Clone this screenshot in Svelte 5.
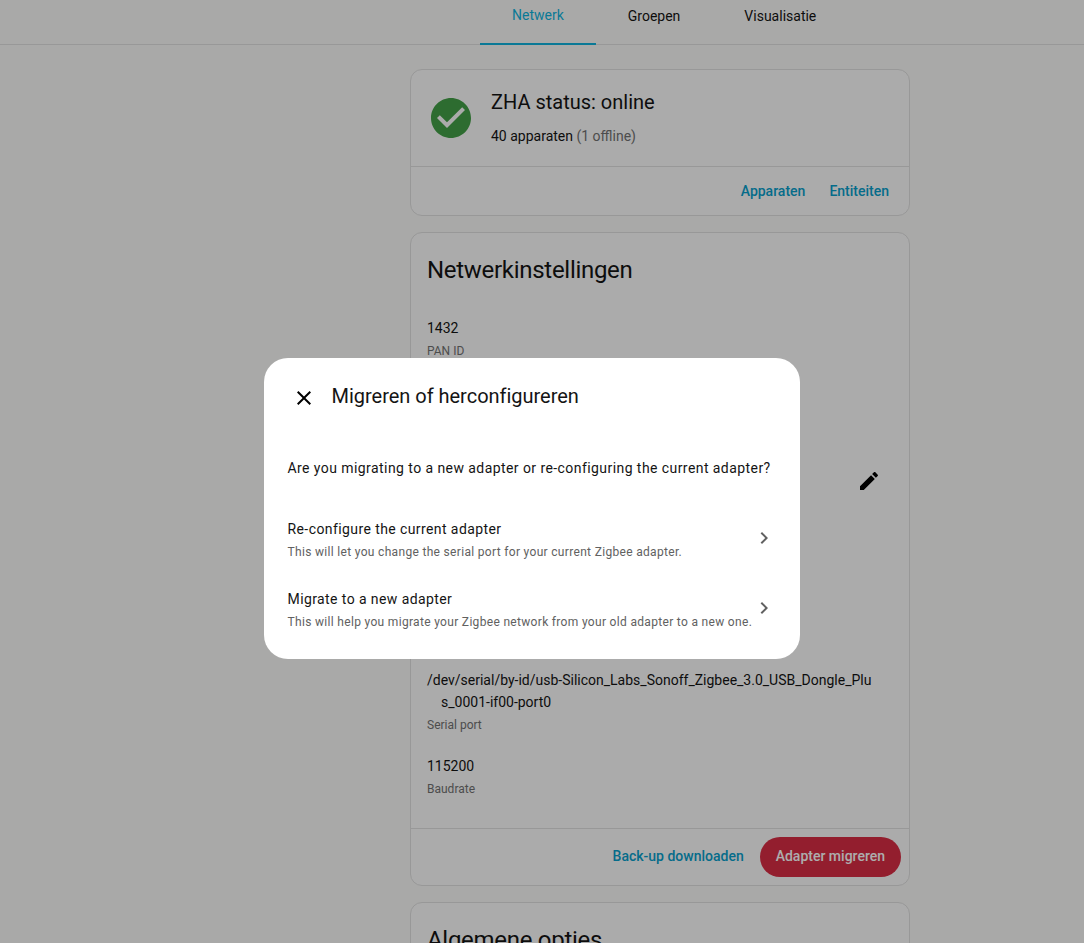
<script>
    const networkRows = [
        { value: "1432", label: "PAN ID" },
        { value: "7f3a91c2d04e6b58", label: "Extended PAN ID" },
        { value: "15", label: "Kanaal", editable: true },
        { value: "00:12:4b:00:24:c1:8e:f0", label: "Coordinator IEEE" },
        { value: "ZNP", label: "Radio type" },
        {
            value: "/dev/serial/by-id/usb-Silicon_Labs_Sonoff_Zigbee_3.0_USB_Dongle_Plus_0001-if00-port0",
            label: "Serial port",
        },
        { value: "115200", label: "Baudrate" },
    ];
</script>

<div class="page">
    <nav class="tabs">
        <a class="tab active" href="#netwerk">Netwerk</a>
        <a class="tab" href="#groepen">Groepen</a>
        <a class="tab" href="#visualisatie">Visualisatie</a>
    </nav>

    <main class="content">
        <section class="card status-card">
            <div class="status">
                <svg class="status-icon" viewBox="0 0 24 24">
                    <path
                        d="M12 2C6.5 2 2 6.5 2 12S6.5 22 12 22 22 17.5 22 12 17.5 2 12 2M10 17L5 12L6.41 10.59L10 14.17L17.59 6.58L19 8L10 17Z"
                    />
                </svg>
                <div>
                    <h2 class="status-title">ZHA status: online</h2>
                    <p class="status-count">40 apparaten <span>(1 offline)</span></p>
                </div>
            </div>
            <div class="actions">
                <a class="link" href="#apparaten">Apparaten</a>
                <a class="link" href="#entiteiten">Entiteiten</a>
            </div>
        </section>

        <section class="card">
            <h1 class="card-title">Netwerkinstellingen</h1>
            <div class="rows">
                {#each networkRows as row}
                    <div class="row" class:editable={row.editable}>
                        <div class="row-text">
                            <div class="row-value">{row.value}</div>
                            <div class="row-label">{row.label}</div>
                        </div>
                        {#if row.editable}
                            <svg class="edit-icon" viewBox="0 0 24 24">
                                <path
                                    d="M20.71,7.04C21.1,6.65 21.1,6 20.71,5.63L18.37,3.29C18,2.9 17.35,2.9 16.96,3.29L15.12,5.12L18.87,8.87M3,17.25V21H6.75L17.81,9.93L14.06,6.18L3,17.25Z"
                                />
                            </svg>
                        {/if}
                    </div>
                {/each}
            </div>
            <div class="actions network-actions">
                <a class="link" href="#backup">Back-up downloaden</a>
                <button class="migrate-btn">Adapter migreren</button>
            </div>
        </section>

        <section class="card">
            <h1 class="card-title">Algemene opties</h1>
        </section>
    </main>
</div>

<div class="scrim"></div>

<div class="dialog" role="dialog">
    <header class="dialog-header">
        <svg class="close-icon" viewBox="0 0 24 24">
            <path
                d="M19,6.41L17.59,5L12,10.59L6.41,5L5,6.41L10.59,12L5,17.59L6.41,19L12,13.41L17.59,19L19,17.59L13.41,12L19,6.41Z"
            />
        </svg>
        <h2 class="dialog-title">Migreren of herconfigureren</h2>
    </header>
    <p class="question">Are you migrating to a new adapter or re-configuring the current adapter?</p>
    <div class="option">
        <div>
            <div class="option-title">Re-configure the current adapter</div>
            <div class="option-desc">This will let you change the serial port for your current Zigbee adapter.</div>
        </div>
        <svg class="chevron" viewBox="0 0 24 24">
            <path d="M8.59,16.58L13.17,12L8.59,7.41L10,6L16,12L10,18L8.59,16.58Z" />
        </svg>
    </div>
    <div class="option">
        <div>
            <div class="option-title">Migrate to a new adapter</div>
            <div class="option-desc">This will help you migrate your Zigbee network from your old adapter to a new one.</div>
        </div>
        <svg class="chevron" viewBox="0 0 24 24">
            <path d="M8.59,16.58L13.17,12L8.59,7.41L10,6L16,12L10,18L8.59,16.58Z" />
        </svg>
    </div>
</div>

<style>
    :global(body) {
        background: #fafaf8;
        overflow: hidden;
    }

    .page {
        height: 943px;
        overflow: hidden;
        font-family: Roboto, "Liberation Sans", sans-serif;
        color: #141414;
    }

    .tabs {
        display: flex;
        height: 44px;
        padding-left: 480px;
        border-bottom: 1px solid #e0e0e0;
    }

    .tab {
        display: flex;
        align-items: center;
        height: 32px;
        padding: 0 32px;
        font-size: 14px;
        font-weight: 400;
        color: #141414;
        text-decoration: none;
    }

    .tab.active {
        box-sizing: border-box;
        height: 45px;
        padding-bottom: 14px;
        color: #0fb3de;
        border-bottom: 2px solid #0fb3de;
    }

    .content {
        display: flex;
        flex-direction: column;
        gap: 16px;
        width: 500px;
        margin-left: 410px;
        padding-top: 24px;
    }

    .card {
        box-sizing: border-box;
        background: #fcfcfc;
        border: 1px solid #e0e0e0;
        border-radius: 12px;
    }

    .status {
        display: flex;
        gap: 16px;
        height: 96px;
        padding-left: 16px;
        align-items: center;
    }

    .status-icon {
        width: 48px;
        height: 48px;
        fill: #43a047;
    }

    .status-title {
        margin: -2px 0 0;
        font-size: 20px;
        font-weight: 400;
        line-height: 28px;
    }

    .status-count {
        margin: 10px 0 0;
        font-size: 14px;
        line-height: 20px;
    }

    .status-count span {
        color: #727272;
    }

    .actions {
        display: flex;
        justify-content: flex-end;
        align-items: center;
        gap: 24px;
        height: 48px;
        padding-right: 20px;
        border-top: 1px solid #e0e0e0;
    }

    .link {
        font-size: 14px;
        font-weight: 500;
        color: #089fcc;
        text-decoration: none;
    }

    .card-title {
        margin: 0;
        padding: 21px 16px 0;
        font-size: 24px;
        font-weight: 400;
        line-height: 32px;
        letter-spacing: -0.29px;
    }

    .rows {
        padding: 31px 16px 9px;
    }

    .row {
        display: flex;
        justify-content: space-between;
        min-height: 64px;
        box-sizing: border-box;
        padding-bottom: 18px;
    }

    .row.editable {
        min-height: 96px;
    }

    .row-value {
        max-width: 434px;
        padding-left: 14px;
        text-indent: -14px;
        font-size: 14px;
        line-height: 22px;
        word-break: break-all;
    }

    .row-label {
        font-size: 12px;
        line-height: 24px;
        color: #727272;
    }

    .edit-icon {
        width: 24px;
        height: 24px;
        margin: 24px 12px 0 0;
        flex-shrink: 0;
    }

    .network-actions {
        height: 56px;
        gap: 16px;
        padding-right: 8px;
    }

    .network-actions .link {
        margin-bottom: 2px;
    }

    .migrate-btn {
        height: 40px;
        padding: 0 16px 2px;
        border: none;
        border-radius: 20px;
        background: #d92d44;
        color: #fff;
        font-family: inherit;
        font-size: 14px;
        font-weight: 500;
    }

    .scrim {
        position: fixed;
        inset: 0;
        background: rgba(0, 0, 0, 0.32);
    }

    .dialog {
        position: fixed;
        left: 264px;
        top: 358px;
        box-sizing: border-box;
        width: 536px;
        height: 301px;
        background: #fff;
        border-radius: 24px;
        font-family: Roboto, "Liberation Sans", sans-serif;
        color: #141414;
    }

    .dialog-header {
        display: flex;
        align-items: center;
        gap: 16px;
        padding: 24px 0 0 28px;
    }

    .close-icon {
        width: 24px;
        height: 24px;
        margin-top: 4px;
    }

    .dialog-title {
        margin: 0 0 0 -0.5px;
        font-size: 20px;
        font-weight: 400;
        line-height: 28px;
        letter-spacing: -0.02px;
    }

    .question {
        margin: 48px 0 0;
        padding: 0 24px 0 23.5px;
        font-size: 14px;
        line-height: 20px;
        letter-spacing: 0.43px;
    }

    .option {
        display: flex;
        align-items: center;
        justify-content: space-between;
        height: 70px;
        padding: 0 24px 0 23.5px;
    }

    .question + .option {
        margin-top: 26px;
    }

    .option-title {
        font-size: 14px;
        line-height: 20px;
        letter-spacing: 0.41px;
    }

    .option-desc {
        margin-top: 5px;
        font-size: 12px;
        line-height: 16px;
        letter-spacing: 0.32px;
        white-space: nowrap;
        color: #616161;
    }

    .chevron {
        width: 24px;
        height: 24px;
        margin-top: -2px;
        flex-shrink: 0;
        fill: #616161;
    }
</style>
